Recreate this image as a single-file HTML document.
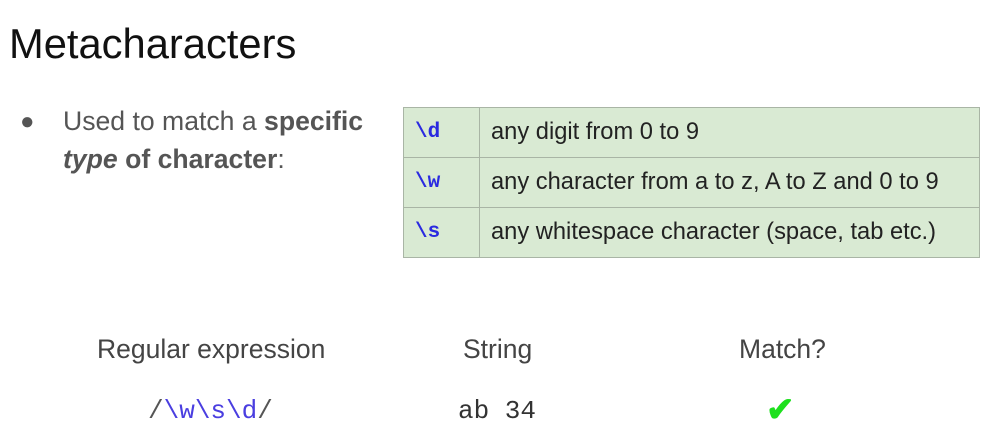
<!DOCTYPE html>
<html><head><style>
body{margin:0;width:1000px;height:440px;background:#fff;position:relative;overflow:hidden;font-family:"Liberation Sans",sans-serif}
.a{position:absolute;white-space:nowrap}
table{position:absolute;left:403px;top:107px;border-collapse:collapse;background:#d9ead3;table-layout:fixed;width:577px}
td{border:1px solid #a9b5a5;height:49px;padding:0;font-size:23.7px;color:#222;overflow:hidden;white-space:nowrap}
td.c{width:64px;padding-left:11px;font-family:"Liberation Mono",monospace;font-weight:bold;color:#2a2ae0;font-size:21px}
td.t{padding-left:11px}
</style></head><body>
<div class="a" style="left:9px;top:20px;font-size:41.7px;color:#111">Metacharacters</div>
<div class="a" style="left:20px;top:108px;font-size:24px;color:#555">●</div>
<div class="a" style="left:63px;top:102px;font-size:26.6px;color:#555;line-height:38px">Used to match a <b>specific</b><br><b><i>type</i> of character</b>:</div>
<table>
<tr><td class="c">\d</td><td class="t">any digit from 0 to 9</td></tr>
<tr><td class="c">\w</td><td class="t">any character from a to z, A to Z and 0 to 9</td></tr>
<tr><td class="c">\s</td><td class="t">any whitespace character (space, tab etc.)</td></tr>
</table>
<div class="a" style="left:97px;top:334px;font-size:26.5px;color:#444">Regular expression</div>
<div class="a" style="left:463px;top:334px;font-size:26.5px;color:#444">String</div>
<div class="a" style="left:739px;top:334px;font-size:26.5px;color:#444">Match?</div>
<div class="a" style="left:148px;top:396px;font-size:26px;font-family:'Liberation Mono',monospace;color:#555">/<span style="color:#4a3ee0">\w\s\d</span>/</div>
<div class="a" style="left:458px;top:396px;font-size:26px;font-family:'Liberation Mono',monospace;color:#333">ab 34</div>
<div class="a" style="left:766px;top:390px;font-size:34px;color:#1ee01e;font-weight:bold">✔</div>
</body></html>
